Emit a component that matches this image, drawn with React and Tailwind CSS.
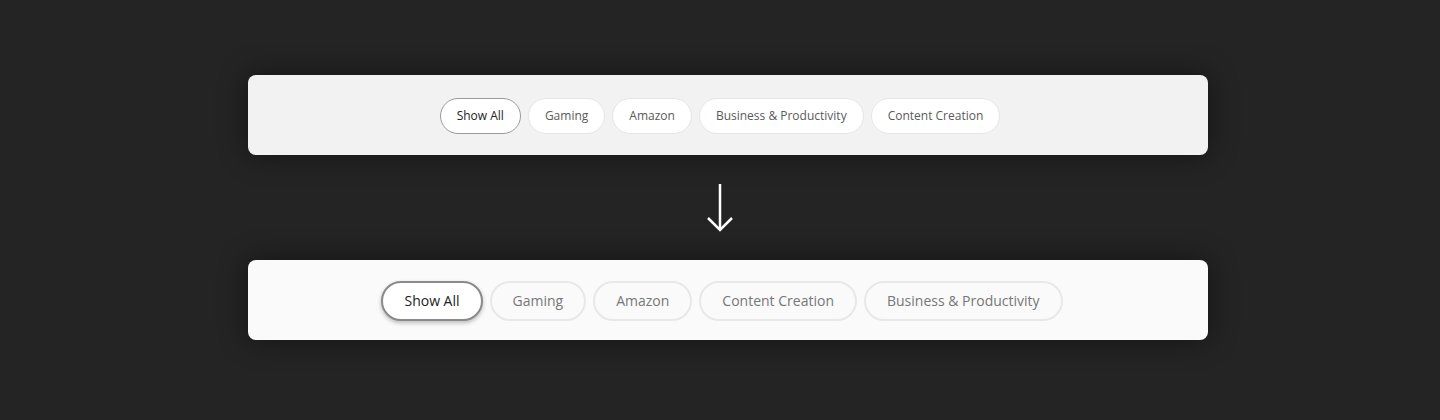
import React from "react";

// Before/after filter pill rows
const TOP = ["Show All", "Gaming", "Amazon", "Business & Productivity", "Content Creation"];
const BOTTOM = ["Show All", "Gaming", "Amazon", "Content Creation", "Business & Productivity"];

export default function App() {
  return (
    <div
      className="flex h-[420px] w-full flex-col items-center bg-[#242424] pl-[16px] pt-[75px]"
      style={{ fontFamily: '"Open Sans", "Liberation Sans", sans-serif' }}
    >
      {/* Before */}
      <div className="flex h-[80px] w-[960px] items-center justify-center gap-[7px] rounded-lg bg-[#f2f2f2] pr-[16px] pt-[1px] shadow-[0_0_30px_rgba(0,0,0,0.45)]">
        {TOP.map((label, i) => (
          <button
            key={label}
            className={
              i === 0
                ? "h-[36px] rounded-full border border-[#9a9a9a] bg-white px-4 text-[12px] text-[#222]"
                : "h-[36px] rounded-full border border-[#e6e6e6] bg-white px-4 text-[12px] text-[#5a5a5a]"
            }
          >
            {label}
          </button>
        ))}
      </div>

      {/* Arrow */}
      <div className="flex h-[105px] items-center justify-center pr-[16px]">
        <svg width="28" height="52" viewBox="0 0 28 52" fill="none" stroke="white" strokeWidth="2.5">
          <line x1="14" y1="2" x2="14" y2="47" />
          <polyline points="2,36 14,48 26,36" />
        </svg>
      </div>

      {/* After */}
      <div className="flex h-[80px] w-[960px] items-center justify-center gap-[7px] rounded-lg bg-[#fafafa] pr-[12px] pt-[1px] shadow-[0_0_30px_rgba(0,0,0,0.45)]">
        {BOTTOM.map((label, i) => (
          <button
            key={label}
            className={
              i === 0
                ? "h-[40px] rounded-full border-2 border-[#8a8a8a] bg-white px-[21px] text-[14px] text-[#222] shadow-[0_2px_4px_rgba(0,0,0,0.25)]"
                : "h-[40px] rounded-full border-2 border-[#e8e8e8] bg-[#fafafa] px-[21px] text-[14px] text-[#777]"
            }
          >
            {label}
          </button>
        ))}
      </div>
    </div>
  );
}
